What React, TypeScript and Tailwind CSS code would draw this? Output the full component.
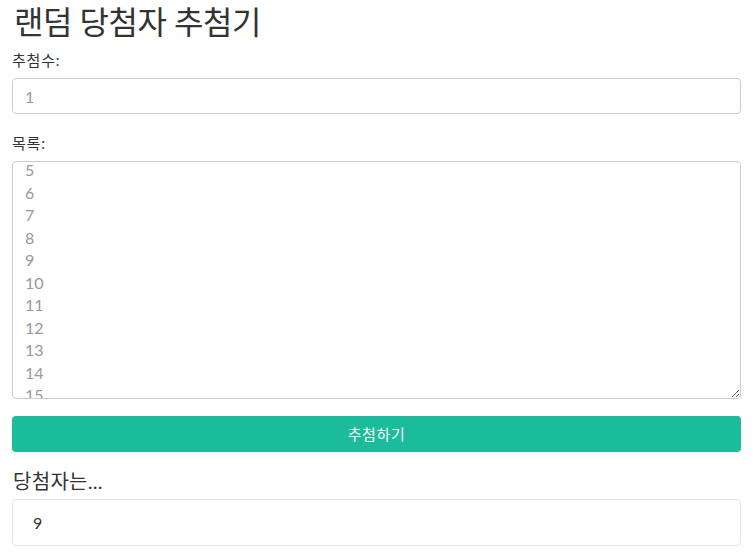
import { useEffect, useRef } from "react";

const FONT = { fontFamily: "Lato, 'Noto Sans CJK KR', sans-serif" };

const list = Array.from({ length: 20 }, (_, i) => String(i + 1)).join("\n");

export default function App() {
  const ref = useRef<HTMLTextAreaElement>(null);

  useEffect(() => {
    if (ref.current) ref.current.scrollTop = 99;
  }, []);

  return (
    <div className="px-3 bg-white text-[#333] min-h-[559px]" style={FONT}>
      <h1 className="text-[32px] leading-[44px] font-normal pl-[2px] tracking-[-0.5px]">랜덤 당첨자 추첨기</h1>

      <label className="block text-[15px] tracking-[0.8px] mt-[6px] mb-[8px] leading-[20px]">추첨수:</label>
      <input
        type="text"
        placeholder="1"
        className="block w-full h-[36px] px-3 border border-[#ccc] rounded text-base placeholder:text-[#999] outline-none"
        style={FONT}
      />

      <label className="block text-[15px] tracking-[0.8px] mt-[19px] mb-[8px] leading-[20px]">목록:</label>
      <textarea
        ref={ref}
        readOnly
        value={list}
        className="block w-full h-[238px] px-3 py-[6px] border border-[#ccc] rounded text-base leading-[22.5px] text-[#999] outline-none overflow-hidden"
        style={FONT}
      />

      <button
        type="button"
        className="block w-full h-[36px] mt-[17px] rounded bg-[#1abc9c] text-white text-[15px] tracking-[0.6px]"
        style={FONT}
      >
        추첨하기
      </button>

      <h3 className="text-[20px] leading-[28px] mt-[15px] mb-[4px] pl-[1px] tracking-[0.3px]">당첨자는...</h3>
      <div className="h-[47px] border border-[#e3e3e3] rounded flex items-center px-[20px] text-base">
        9
      </div>
    </div>
  );
}
